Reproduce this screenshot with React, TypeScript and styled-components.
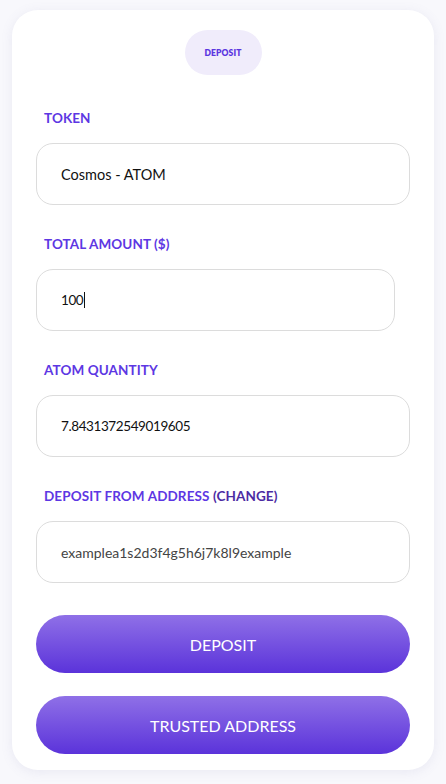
import React from 'react';
import styled, { createGlobalStyle } from 'styled-components';

const GlobalStyle = createGlobalStyle`
  html, body {
    margin: 0;
    padding: 0;
    background: #f8f8fc;
  }
  body {
    font-family: 'Lato', 'Noto Sans', sans-serif;
    -webkit-font-smoothing: antialiased;
  }
  * { box-sizing: border-box; }
`;

const Page = styled.div`
  padding: 10px 12px 15px;
  min-height: 784px;
`;

const Card = styled.div`
  background: #ffffff;
  border-radius: 26px;
  box-shadow: 0 2px 12px rgba(120, 120, 170, 0.12);
  padding: 20px 24px 16px;
  display: flex;
  flex-direction: column;
`;

const PillRow = styled.div`
  display: flex;
  justify-content: center;
  margin-bottom: 35px;
`;

const Pill = styled.div`
  width: 77px;
  height: 45px;
  border-radius: 23px;
  background: #f0ecfb;
  color: #5b36e0;
  font-size: 8.5px;
  font-weight: 800;
  letter-spacing: 0.1px;
  display: flex;
  align-items: center;
  justify-content: center;
`;

const Fields = styled.div`
  display: flex;
  flex-direction: column;
  gap: 31px;
`;

const Field = styled.div`
  display: flex;
  flex-direction: column;
  gap: 17px;
`;

const Label = styled.div`
  padding-left: 8px;
  font-size: 13.5px;
  line-height: 16px;
  font-weight: 700;
  color: #5d37e3;
  letter-spacing: 0.1px;
`;

const LabelDark = styled.span`
  color: #4c2ba3;
`;

const InputBox = styled.div<{ $width?: number; $tone?: 'muted' | 'digits' }>`
  width: ${p => (p.$width ? `${p.$width}px` : '100%')};
  height: 62px;
  border: 1px solid #dcdcdc;
  border-radius: 17px;
  padding: 0 24px;
  display: flex;
  align-items: center;
  font-size: ${p => (p.$tone === 'muted' ? '14px' : p.$tone === 'digits' ? '13.5px' : '14.5px')};
  letter-spacing: ${p => (p.$tone === 'digits' ? '-0.4px' : '0')};
  color: ${p => (p.$tone === 'muted' ? '#444444' : '#111111')};
`;

const Caret = styled.span`
  display: inline-block;
  width: 1px;
  height: 16px;
  background: #111;
  margin-left: 1px;
`;

const Buttons = styled.div`
  display: flex;
  flex-direction: column;
  gap: 23px;
  margin-top: 32px;
`;

const PrimaryButton = styled.button`
  height: 58px;
  width: 100%;
  border: none;
  border-radius: 29px;
  background: linear-gradient(180deg, #8f70e7 0%, #5b33da 100%);
  color: #ffffff;
  font-family: inherit;
  font-size: 16px;
  font-weight: 400;
  letter-spacing: 0;
  cursor: pointer;
`;

export default function App() {
  return (
    <>
      <GlobalStyle />
      <Page>
        <Card>
          <PillRow>
            <Pill>DEPOSIT</Pill>
          </PillRow>
          <Fields>
            <Field>
              <Label>TOKEN</Label>
              <InputBox>Cosmos - ATOM</InputBox>
            </Field>
            <Field>
              <Label>TOTAL AMOUNT ($)</Label>
              <InputBox $width={359} $tone="digits">
                100<Caret />
              </InputBox>
            </Field>
            <Field>
              <Label>ATOM QUANTITY</Label>
              <InputBox $tone="digits">7.8431372549019605</InputBox>
            </Field>
            <Field>
              <Label>
                DEPOSIT FROM ADDRESS <LabelDark>(CHANGE)</LabelDark>
              </Label>
              <InputBox $tone="muted">examplea1s2d3f4g5h6j7k8l9example</InputBox>
            </Field>
          </Fields>
          <Buttons>
            <PrimaryButton>DEPOSIT</PrimaryButton>
            <PrimaryButton>TRUSTED ADDRESS</PrimaryButton>
          </Buttons>
        </Card>
      </Page>
    </>
  );
}
